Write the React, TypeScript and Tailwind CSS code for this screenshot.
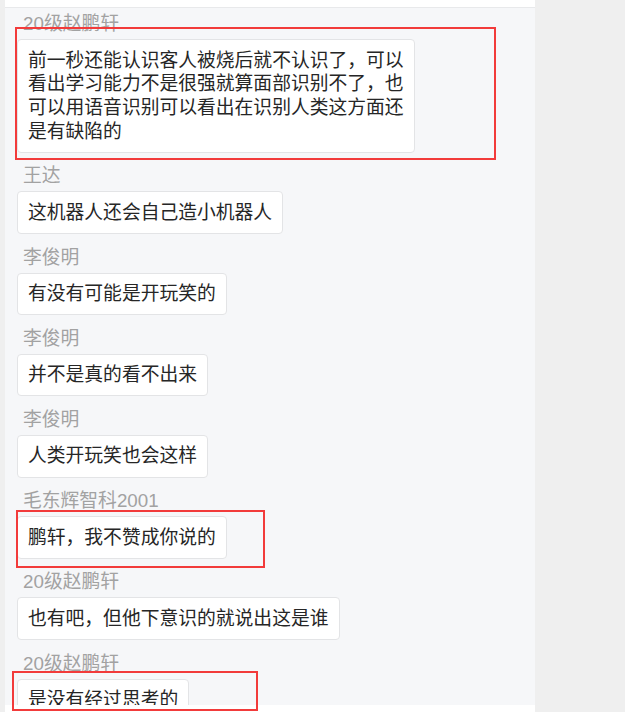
import React from "react";

type Msg = { name: string; lines: string[] };

const msgs: Msg[] = [
  {
    name: "20级赵鹏轩",
    lines: [
      "前一秒还能认识客人被烧后就不认识了，可以",
      "看出学习能力不是很强就算面部识别不了，也",
      "可以用语音识别可以看出在识别人类这方面还",
      "是有缺陷的",
    ],
  },
  { name: "王达", lines: ["这机器人还会自己造小机器人"] },
  { name: "李俊明", lines: ["有没有可能是开玩笑的"] },
  { name: "李俊明", lines: ["并不是真的看不出来"] },
  { name: "李俊明", lines: ["人类开玩笑也会这样"] },
  { name: "毛东辉智科2001", lines: ["鹏轩，我不赞成你说的"] },
  { name: "20级赵鹏轩", lines: ["也有吧，但他下意识的就说出这是谁"] },
  { name: "20级赵鹏轩", lines: ["是没有经过思考的"] },
];

const font = {
  fontFamily:
    '"Liberation Sans", "Noto Sans CJK SC", "Noto Sans", sans-serif',
};

export default function App() {
  return (
    <div
      className="relative w-[625px] h-[712px] bg-[#efefef] flex overflow-hidden"
      style={font}
    >
      <div className="ml-[5px] w-[530px] flex flex-col">
        <div className="h-[8px] bg-white border-b border-[#e8e9eb] shrink-0" />
        <div className="flex-1 bg-[#f6f7f9] overflow-hidden pt-[5px] px-[12px]">
          {msgs.map((m, i) => (
            <div key={i} className="mb-[12.5px]">
              <div className="pl-[6px] h-[22px] leading-[22px] text-[18.8px] text-[#a2a2a2]">
                {m.name}
              </div>
              <div className="mt-[4px] w-fit bg-white border border-[#e3e4e6] rounded-[4px] px-[10px] py-[8.5px] text-[18.8px] leading-[23.7px] text-[#262626] whitespace-nowrap">
                {m.lines.map((l, j) => (
                  <div key={j}>{l}</div>
                ))}
              </div>
            </div>
          ))}
        </div>
        <div className="h-[7px] bg-white shrink-0" />
      </div>

      <div className="absolute left-[15px] top-[27px] w-[481px] h-[133px] border-[2.5px] border-[#f23b3b]" />
      <div className="absolute left-[16px] top-[510px] w-[249px] h-[58px] border-[2.5px] border-[#f23b3b]" />
      <div className="absolute left-[12px] top-[671px] w-[246px] h-[40px] border-[2.5px] border-[#f23b3b]" />
    </div>
  );
}
